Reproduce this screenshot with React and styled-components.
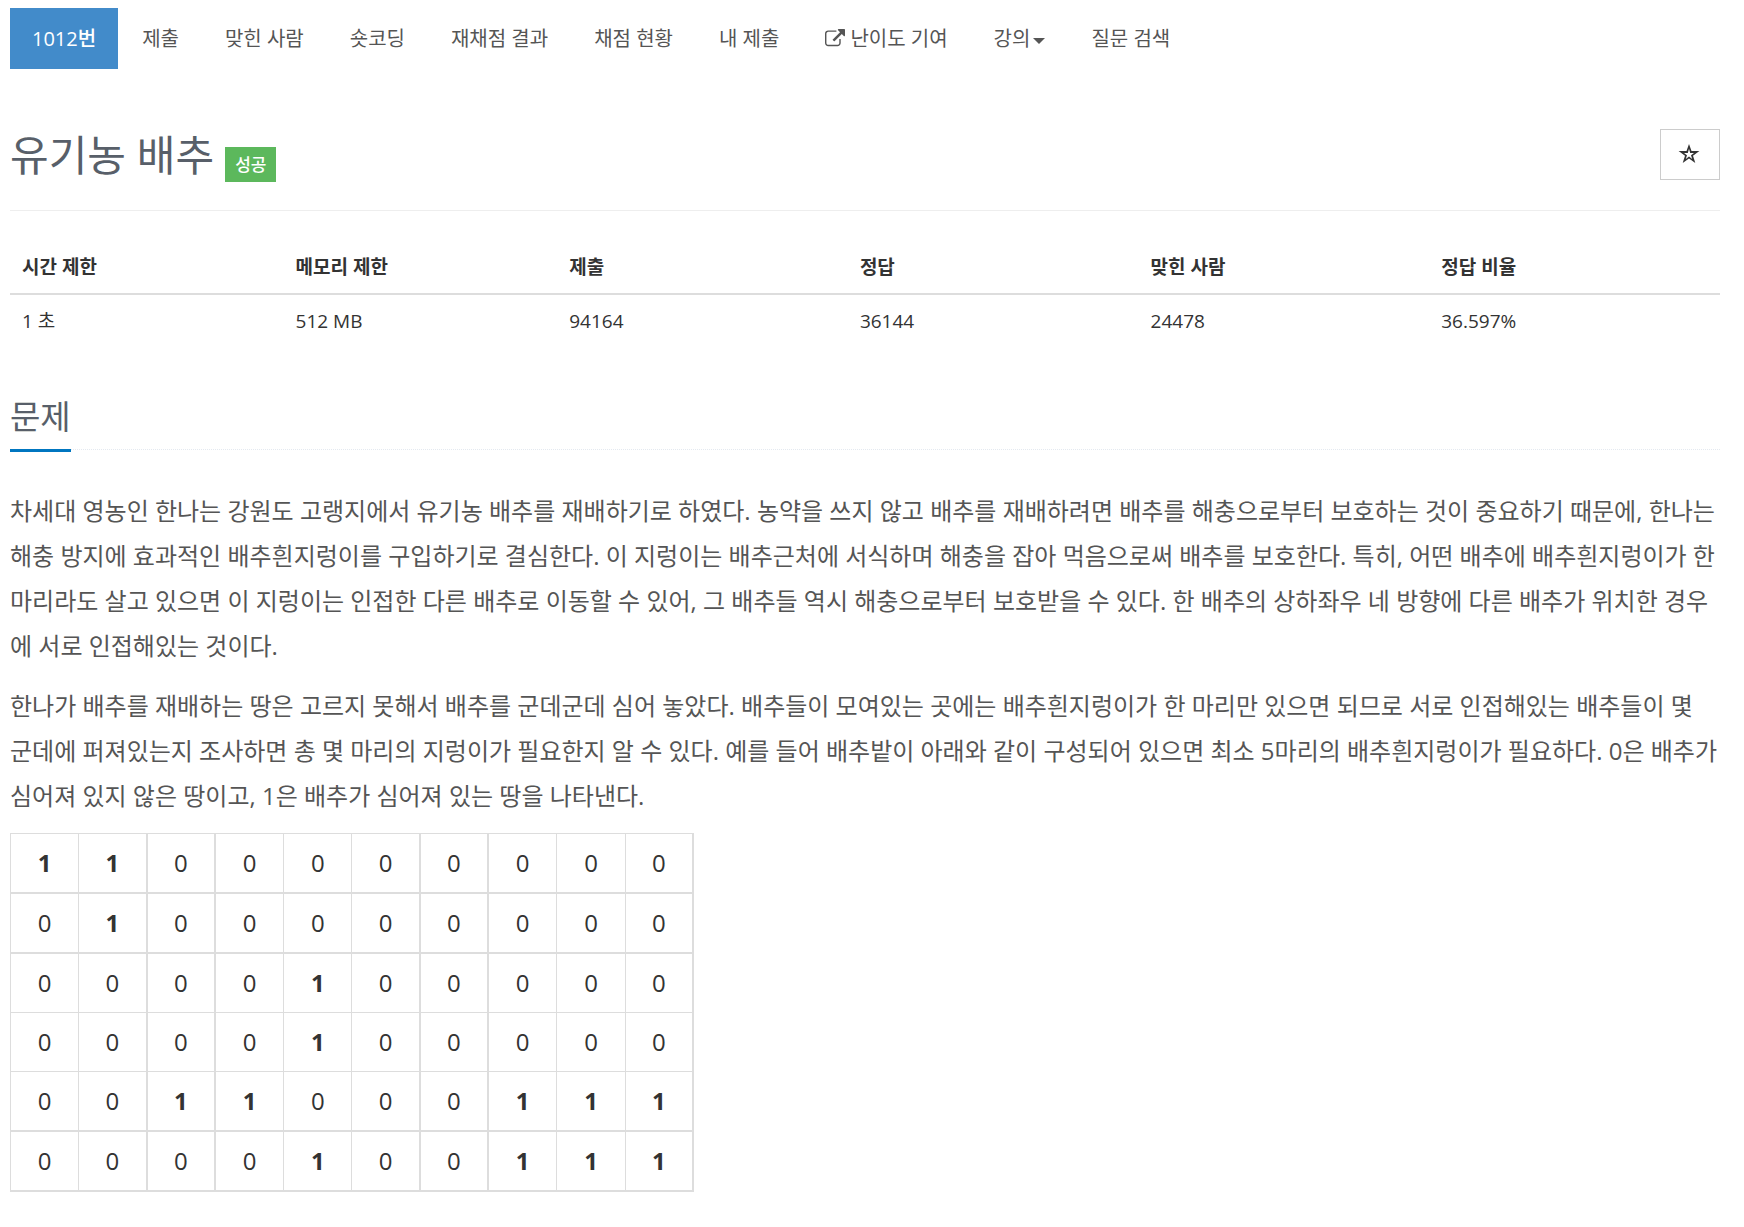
import React from "react";
import styled, { createGlobalStyle } from "styled-components";

const GlobalStyle = createGlobalStyle`
  *, *::before, *::after { box-sizing: border-box; }
  body {
    margin: 0;
    background: #fff;
    color: #333;
    font-family: "Open Sans", "Noto Sans CJK KR", sans-serif;
    font-size: 19px;
    line-height: 28px;
  }
`;

const Page = styled.main`
  padding: 8px 24px 32px 10px;
`;

const Nav = styled.nav`
  display: flex;
  flex-wrap: wrap;
  gap: 2px;
  font-size: 20px;
`;

const NavLink = styled.a`
  display: inline-flex;
  align-items: center;
  padding: 17px 22px 16px;
  color: ${(p) => (p.$active ? "#fff" : "#555")};
  background: ${(p) => (p.$active ? "#428bca" : "transparent")};
  font-weight: ${(p) => (p.$active ? 500 : 400)};
  text-decoration: none;
`;

const LinkIcon = styled.svg`
  width: 20px;
  height: 20px;
  margin-right: 5px;
  fill: currentColor;
`;

const Caret = styled.span`
  margin: 4px 0 0 3px;
  border: 6px solid transparent;
  border-top-color: currentColor;
  border-bottom: 0;
`;

const Header = styled.header`
  display: flex;
  justify-content: space-between;
  align-items: flex-start;
  margin-top: 60px;
  height: 82px;
  border-bottom: 1px solid #eee;
`;

const TitleGroup = styled.div`
  display: flex;
  align-items: flex-end;
  gap: 11px;
`;

const Title = styled.h1`
  margin: 0;
  padding-bottom: 2px;
  color: #585f69;
  font-size: 42px;
  font-weight: 400;
  line-height: 51px;
`;

const Badge = styled.span`
  padding: 0 10px;
  color: #fff;
  background: #5cb85c;
  font-size: 17px;
  font-weight: 500;
  line-height: 35px;
`;

const StarButton = styled.button`
  display: grid;
  place-items: center;
  width: 60px;
  height: 51px;
  padding: 0 2px 2px 0;
  color: #333;
  background: #fff;
  border: 1px solid #ccc;
`;

const InfoTable = styled.table`
  width: 100%;
  margin-top: 30px;
  table-layout: fixed;
  border-collapse: collapse;

  th, td {
    padding: 12px;
    text-align: left;
  }
  th {
    font-weight: 700;
    border-bottom: 2px solid #ddd;
  }
`;

const Column = styled.col`
  width: ${(p) => p.$share}%;
`;

const SectionHead = styled.div`
  display: flex;
  margin-top: 43px;
  height: 60px;
  border-bottom: 1px dotted #e4e9f0;
`;

const SectionTitle = styled.h2`
  margin: 0;
  height: 62px;
  color: #585f69;
  border-bottom: 3px solid #0076c0;
  font-size: 33px;
  font-weight: 400;
  line-height: 54px;
`;

const Description = styled.section`
  margin-top: 38px;
  color: #555;
  font-size: 24px;
  line-height: 45px;

  p { margin: 0 0 15px; }
`;

const Field = styled.table`
  width: 40%;
  color: #333;
  table-layout: fixed;
  border-collapse: separate;
  border-spacing: 0;
  border: solid #ddd;
  border-width: 1px 0 0 1px;
  line-height: 34px;
`;

const Cell = styled.td`
  padding: 12px;
  text-align: center;
  border: solid #ddd;
  border-width: 0 ${(p) => (p.$thickRight ? 2 : 1)}px ${(p) => (p.$thickBottom ? 2 : 1)}px 0;
`;

const menu = [
  { label: "1012번", active: true },
  { label: "제출" },
  { label: "맞힌 사람" },
  { label: "숏코딩" },
  { label: "재채점 결과" },
  { label: "채점 현황" },
  { label: "내 제출" },
  { label: "난이도 기여", external: true },
  { label: "강의", dropdown: true },
  { label: "질문 검색" },
];

const info = [
  { head: "시간 제한", value: "1 초", share: 16 },
  { head: "메모리 제한", value: "512 MB", share: 16 },
  { head: "제출", value: "94164", share: 17 },
  { head: "정답", value: "36144", share: 17 },
  { head: "맞힌 사람", value: "24478", share: 17 },
  { head: "정답 비율", value: "36.597%", share: 17 },
];

const field = [
  "1100000000",
  "0100000000",
  "0000100000",
  "0000100000",
  "0011000111",
  "0000100111",
];

const thickColumns = [1, 2, 5, 6, 9];
const thickRows = [0, 1, 4, 5];

const ExternalIcon = () => (
  <LinkIcon viewBox="0 0 1792 1792" aria-hidden="true">
    <path d="M1408 928v320q0 119-84.5 203.5t-203.5 84.5h-832q-119 0-203.5-84.5t-84.5-203.5v-832q0-119 84.5-203.5t203.5-84.5h704q14 0 23 9t9 23v64q0 14-9 23t-23 9h-704q-66 0-113 47t-47 113v832q0 66 47 113t113 47h832q66 0 113-47t47-113v-320q0-14 9-23t23-9h64q14 0 23 9t9 23zm384-864v512q0 26-19 45t-45 19-45-19l-176-176-652 652q-10 10-23 10t-23-10l-114-114q-10-10-10-23t10-23l652-652-176-176q-19-19-19-45t19-45 45-19h512q26 0 45 19t19 45z" />
  </LinkIcon>
);

const StarIcon = () => (
  <svg width="22" height="22" viewBox="0 0 22 22" aria-hidden="true">
    <path
      fill="currentColor"
      fillRule="evenodd"
      d="M11 1L13.5 8.1H21.4L15 12.7L17.3 20L11 15.6L4.7 20L7 12.7L0.6 8.1H8.5ZM11 5.8L9.8 9.9H6L9 12.2L7.8 16L11 13.6L14.2 16L13 12.2L16 9.9H12.2Z"
    />
  </svg>
);

export default function App() {
  return (
    <>
      <GlobalStyle />
      <Page>
        <Nav>
          {menu.map((m) => (
            <NavLink key={m.label} href="#" $active={m.active}>
              {m.external && <ExternalIcon />}
              {m.label}
              {m.dropdown && <Caret />}
            </NavLink>
          ))}
        </Nav>

        <Header>
          <TitleGroup>
            <Title>유기농 배추</Title>
            <Badge>성공</Badge>
          </TitleGroup>
          <StarButton type="button" aria-label="즐겨찾기">
            <StarIcon />
          </StarButton>
        </Header>

        <InfoTable>
          <colgroup>
            {info.map((c) => (
              <Column key={c.head} $share={c.share} />
            ))}
          </colgroup>
          <thead>
            <tr>
              {info.map((c) => (
                <th key={c.head} scope="col">{c.head}</th>
              ))}
            </tr>
          </thead>
          <tbody>
            <tr>
              {info.map((c) => (
                <td key={c.head}>{c.value}</td>
              ))}
            </tr>
          </tbody>
        </InfoTable>

        <SectionHead>
          <SectionTitle>문제</SectionTitle>
        </SectionHead>

        <Description>
          <p>
            차세대 영농인 한나는 강원도 고랭지에서 유기농 배추를 재배하기로 하였다. 농약을 쓰지 않고 배추를 재배하려면 배추를 해충으로부터 보호하는 것이 중요하기 때문에, 한나는 해충 방지에 효과적인 배추흰지렁이를 구입하기로 결심한다. 이 지렁이는 배추근처에 서식하며 해충을 잡아 먹음으로써 배추를 보호한다. 특히, 어떤 배추에 배추흰지렁이가 한 마리라도 살고 있으면 이 지렁이는 인접한 다른 배추로 이동할 수 있어, 그 배추들 역시 해충으로부터 보호받을 수 있다. 한 배추의 상하좌우 네 방향에 다른 배추가 위치한 경우에 서로 인접해있는 것이다.
          </p>
          <p>
            한나가 배추를 재배하는 땅은 고르지 못해서 배추를 군데군데 심어 놓았다. 배추들이 모여있는 곳에는 배추흰지렁이가 한 마리만 있으면 되므로 서로 인접해있는 배추들이 몇 군데에 퍼져있는지 조사하면 총 몇 마리의 지렁이가 필요한지 알 수 있다. 예를 들어 배추밭이 아래와 같이 구성되어 있으면 최소 5마리의 배추흰지렁이가 필요하다. 0은 배추가 심어져 있지 않은 땅이고, 1은 배추가 심어져 있는 땅을 나타낸다.
          </p>
          <Field>
            <tbody>
              {field.map((row, y) => (
                <tr key={y}>
                  {[...row].map((cell, x) => (
                    <Cell
                      key={x}
                      $thickRight={thickColumns.includes(x)}
                      $thickBottom={thickRows.includes(y)}
                    >
                      {cell === "1" ? <strong>1</strong> : cell}
                    </Cell>
                  ))}
                </tr>
              ))}
            </tbody>
          </Field>
        </Description>
      </Page>
    </>
  );
}
